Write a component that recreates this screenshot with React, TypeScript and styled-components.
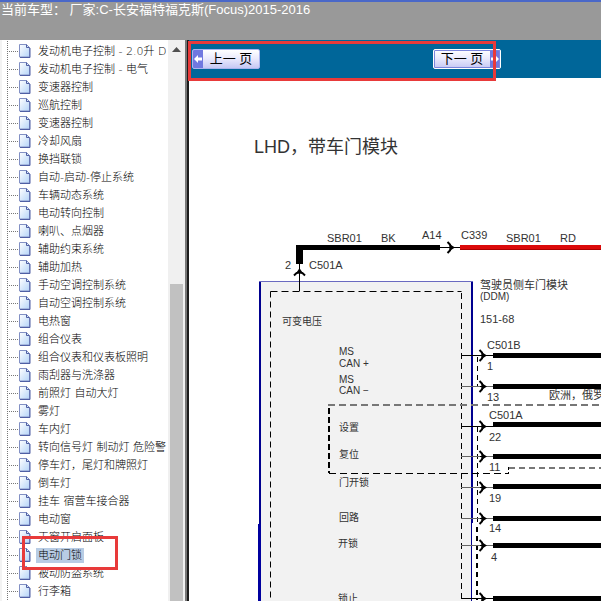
import React from "react";
import styled, { createGlobalStyle } from "styled-components";

const GlobalStyle = createGlobalStyle`
  * { box-sizing: border-box; }
  body {
    margin: 0;
    background: #fff;
    font-family: "Liberation Sans", "Noto Sans CJK SC", sans-serif;
  }
`;

const Page = styled.div`
  display: flex;
  flex-direction: column;
  height: 100vh;
  overflow: hidden;
  position: relative;
`;

const Header = styled.header`
  flex: none;
  height: 40px;
  background: #999;
  border-top: 2px solid #4a68c8;
  color: #fff;
  font-size: 13px;
  font-weight: 400;
  line-height: 16px;
  padding-left: 1px;
  white-space: pre;
`;

const Body = styled.div`
  flex: 1;
  min-height: 0;
  display: flex;
`;

const Sidebar = styled.nav`
  flex: none;
  width: 189px;
  display: flex;
  overflow: hidden;
  border-right: 2px solid #1c1c1c;
`;

const TreeScroll = styled.div`
  flex: 1;
  min-width: 0;
  overflow: hidden;
  border-left: 2px solid #f3f3f3;
`;

const Tree = styled.ul`
  list-style: none;
  margin: -16px 0 0 5px;
  padding: 0;
  border-left: 1px dotted #777;
`;

const TreeRow = styled.li`
  display: flex;
  align-items: center;
  height: 18px;
  white-space: nowrap;
`;

const Branch = styled.span`
  flex: none;
  width: 9px;
  margin-left: 1px;
  border-top: 1px dotted #777;
`;

const PageIconSvg = styled.svg`
  flex: none;
  display: block;
`;

const TreeLink = styled.a<{ $selected?: boolean }>`
  margin-left: 4px;
  padding: 0 2px;
  height: 15px;
  line-height: 15px;
  font-family: "DejaVu Sans", "Noto Sans CJK SC", sans-serif;
  font-size: 11px;
  font-weight: 300;
  color: #000;
  text-decoration: none;
  background: ${(p) => (p.$selected ? "#b8cce4" : "transparent")};
`;

const ScrollTrack = styled.div`
  flex: none;
  width: 19px;
  display: flex;
  flex-direction: column;
  align-items: center;
  background: #f0f0f0;
  border-right: 2px solid #777;
  padding-top: 7px;
`;

const ScrollUp = styled.svg`
  flex: none;
  display: block;
`;

const ScrollThumb = styled.div`
  width: 13px;
  flex: 1;
  margin-top: 232px;
  background: #c1c1c1;
`;

const Content = styled.main`
  flex: 1;
  min-width: 0;
  display: flex;
  flex-direction: column;
`;

const Toolbar = styled.div`
  flex: none;
  height: 38px;
  display: flex;
  align-items: center;
  gap: 173px;
  padding-left: 3px;
  background: #069;
`;

const PagerButton = styled.button<{ $next?: boolean }>`
  display: flex;
  flex-direction: ${(p) => (p.$next ? "row-reverse" : "row")};
  align-items: stretch;
  flex: none;
  width: 68px;
  height: 20px;
  padding: 0;
  overflow: hidden;
  border: 1px solid ${(p) => (p.$next ? "#fff" : "#aab4ee")};
  border-radius: 2px;
  outline: ${(p) => (p.$next ? "1px solid #7c86dd" : "none")};
  outline-offset: -2px;
  background: linear-gradient(#fff, #e8e8fc 50%, #c6c8f4);
  color: #000;
  font-family: "Liberation Sans", "Noto Sans CJK SC", sans-serif;
  font-size: 13px;
  font-weight: 400;
`;

const PagerIcon = styled.svg`
  flex: none;
  display: block;
  background: #7078e0;
`;

const PagerText = styled.span`
  flex: 1;
  line-height: 18px;
  text-align: center;
  white-space: pre;
`;

const Canvas = styled.div`
  flex: 1;
  min-height: 0;
  overflow: hidden;
`;

const Diagram = styled.svg`
  display: block;
  width: 100%;
  height: 100%;
  font-family: "Liberation Sans", "Noto Sans CJK SC", sans-serif;
  font-weight: 400;
  fill: #333;
`;

const Highlight = styled.div<{ $x: number; $y: number; $w: number; $h: number }>`
  position: absolute;
  left: ${(p) => p.$x}px;
  top: ${(p) => p.$y}px;
  width: ${(p) => p.$w}px;
  height: ${(p) => p.$h}px;
  border: 3px solid #e83a3a;
  pointer-events: none;
`;

const treeItems = [
  "",
  "发动机电子控制 - 2.0升 D",
  "发动机电子控制 - 电气",
  "变速器控制",
  "巡航控制",
  "变速器控制",
  "冷却风扇",
  "换挡联锁",
  "自动-启动-停止系统",
  "车辆动态系统",
  "电动转向控制",
  "喇叭、点烟器",
  "辅助约束系统",
  "辅助加热",
  "手动空调控制系统",
  "自动空调控制系统",
  "电热窗",
  "组合仪表",
  "组合仪表和仪表板照明",
  "雨刮器与洗涤器",
  "前照灯 自动大灯",
  "雾灯",
  "车内灯",
  "转向信号灯 制动灯 危险警",
  "停车灯，尾灯和牌照灯",
  "倒车灯",
  "挂车 宿营车接合器",
  "电动窗",
  "天窗开启面板",
  "电动门锁",
  "被动防盗系统",
  "行李箱",
  "",
];

function PageIcon() {
  return (
    <PageIconSvg width="14" height="16" viewBox="0 0 14 16" aria-hidden="true">
      <defs>
        <linearGradient id="sheet" x1="0" y1="0" x2="1" y2="1">
          <stop offset="0" stopColor="#fff" />
          <stop offset="1" stopColor="#b4d4f8" />
        </linearGradient>
      </defs>
      <path d="M1.5 1.5h7l3 3v9.500h-10z" fill="url(#sheet)" stroke="#8290c4" />
      <path d="M8.500 1.500v3h3M12 5v9.500H2" fill="none" stroke="#4f5fa4" />
    </PageIconSvg>
  );
}

type Wire = { y: number; thin: string; top: number; pin: string; px: number; py: number };

const wires: Wire[] = [
  { y: 355, thin: "#000", top: 353, pin: "1", px: 487, py: 370 },
  { y: 386, thin: "#666", top: 384, pin: "13", px: 487, py: 401 },
  { y: 426, thin: "#000", top: 422, pin: "22", px: 489, py: 441 },
  { y: 456, thin: "#666", top: 454, pin: "11", px: 489, py: 471 },
  { y: 487, thin: "#666", top: 484, pin: "19", px: 489, py: 502 },
  { y: 518, thin: "#666", top: 516, pin: "14", px: 489, py: 532 },
  { y: 545, thin: "#666", top: 543, pin: "4", px: 491, py: 561 },
  { y: 598, thin: "#000", top: 596, pin: "", px: 491, py: 614 },
];

type Label = { x: number; y: number; size: number; text: string };

const labels: Label[] = [
  { x: 254, y: 153, size: 18, text: "LHD，带车门模块" },
  { x: 327, y: 242, size: 11, text: "SBR01" },
  { x: 381, y: 242, size: 11, text: "BK" },
  { x: 422, y: 239, size: 11, text: "A14" },
  { x: 461, y: 239, size: 11, text: "C339" },
  { x: 506, y: 242, size: 11, text: "SBR01" },
  { x: 560, y: 242, size: 11, text: "RD" },
  { x: 285, y: 269, size: 11, text: "2" },
  { x: 309, y: 269, size: 11, text: "C501A" },
  { x: 480, y: 289, size: 11, text: "驾驶员侧车门模块" },
  { x: 480, y: 300, size: 10, text: "(DDM)" },
  { x: 480, y: 323, size: 11, text: "151-68" },
  { x: 282, y: 325, size: 10, text: "可变电压" },
  { x: 339, y: 355, size: 10, text: "MS" },
  { x: 339, y: 367, size: 10, text: "CAN +" },
  { x: 339, y: 383, size: 10, text: "MS" },
  { x: 339, y: 394, size: 10, text: "CAN −" },
  { x: 339, y: 431, size: 10, text: "设置" },
  { x: 339, y: 458, size: 10, text: "复位" },
  { x: 339, y: 486, size: 10, text: "门开锁" },
  { x: 339, y: 521, size: 10, text: "回路" },
  { x: 338, y: 547, size: 10, text: "开锁" },
  { x: 338, y: 602, size: 10, text: "锁止" },
  { x: 487, y: 349, size: 11, text: "C501B" },
  { x: 489, y: 419, size: 11, text: "C501A" },
  { x: 549, y: 399, size: 11, text: "欧洲，俄罗" },
];

const FAR = 3000;

function ArrowHead({ x, y, up }: { x: number; y: number; up?: boolean }) {
  return (
    <g transform={`translate(${x} ${y})${up ? " rotate(-90)" : ""}`}>
      <path d="M-5.500 -5.500L-3 -3L-2 0L-3 3L-5.500 5.500" fill="none" stroke="#000" strokeWidth="2" />
      <path d="M-3.500 -3.500L2 0L-3.500 3.500Z" fill="#000" />
      <path d="M-5 0H0" stroke="#000" />
    </g>
  );
}

function WiringDiagram() {
  return (
    <Diagram role="img" aria-label="LHD，带车门模块">
      <g transform="translate(-189 -78)">
        {/* door module housing */}
        <rect x="260" y="282" width="212" height="2000" fill="#f2f2f2" />
        <path d="M259 281.500H473" stroke="#6a6ac0" />
        <path d="M260 282V524" stroke="#00008f" strokeWidth="2" />
        <path d="M259.500 524V2200" stroke="#00009f" strokeWidth="3" />
        <path d="M472 282V523" stroke="#00008f" strokeWidth="2" />
        <path d="M471.500 523V2200" stroke="#00008f" />
        <g fill="none" stroke="#000">
          <path d="M270.500 291.500H461.500" strokeDasharray="7 4" />
          <path d="M270.500 291.500V2200" strokeDasharray="6 4" />
          <path d="M461.500 293V2200" strokeDasharray="6 4" />
        </g>

        {/* supply line */}
        <path d="M296 245H440V250H303V264H296Z" fill="#000" />
        <path d="M299.500 264V291M440 247.500H460" stroke="#000" />
        <ArrowHead x={299.5} y={270} up />
        <ArrowHead x={453} y={247.5} />
        <rect x="460" y="245" width={FAR} height="5" fill="#dc0a0a" />
        <path d="M460 249.500H3000" stroke="#a00" />

        {/* option group */}
        <path d="M328 405H3000" stroke="#777" strokeWidth="2" strokeDasharray="7 4" />
        <path d="M329 408V473" stroke="#000" strokeWidth="2" strokeDasharray="6 3" />
        <path d="M329 473.500H508" stroke="#000" strokeDasharray="7 4" />
        <path d="M508.500 467V474" stroke="#000" strokeDasharray="3 2" />
        <path d="M509 468H3000" stroke="#777" strokeWidth="2" strokeDasharray="6 4" />

        {/* connector pins */}
        <g stroke="#000" strokeDasharray="5 4">
          <path d="M477.500 357V387" />
          <path d="M477.500 427V523" />
          <path d="M477 527V600" strokeWidth="2" />
        </g>
        {wires.map((w) => (
          <g key={w.y}>
            <rect x="461" y={w.y} width="32" height="1" fill={w.thin} />
            <ArrowHead x={485} y={w.y + 0.5} />
            <rect x="493" y={w.top} width={FAR} height="5" fill="#000" />
            <text x={w.px} y={w.py} fontSize="11">{w.pin}</text>
          </g>
        ))}

        {labels.map((l) => (
          <text key={`${l.x}-${l.y}`} x={l.x} y={l.y} fontSize={l.size}>{l.text}</text>
        ))}
      </g>
    </Diagram>
  );
}

export default function App() {
  return (
    <>
      <GlobalStyle />
      <Page>
        <Header>{"当前车型： 厂家:C-长安福特福克斯(Focus)2015-2016"}</Header>
        <Body>
          <Sidebar>
            <TreeScroll>
              <Tree>
                {treeItems.map((label, i) => (
                  <TreeRow key={i}>
                    <Branch />
                    <PageIcon />
                    {label && (
                      <TreeLink href="#" $selected={label === "电动门锁"}>{label}</TreeLink>
                    )}
                  </TreeRow>
                ))}
              </Tree>
            </TreeScroll>
            <ScrollTrack>
              <ScrollUp width="9" height="5" viewBox="0 0 9 5" aria-hidden="true">
                <path d="M4.500 0L9 5H0Z" fill="#505050" />
              </ScrollUp>
              <ScrollThumb />
            </ScrollTrack>
          </Sidebar>
          <Content>
            <Toolbar>
              <PagerButton type="button">
                <PagerIcon width="10" height="18" viewBox="0 0 10 18" aria-hidden="true">
                  <path d="M1 9L5 5V7.500H9V10.500H5V13Z" fill="#fff" />
                </PagerIcon>
                <PagerText>上一 页</PagerText>
              </PagerButton>
              <PagerButton type="button" $next>
                <PagerIcon width="10" height="18" viewBox="0 0 10 18" aria-hidden="true">
                  <path d="M9 9L5 5V7.500H1V10.500H5V13Z" fill="#fff" />
                </PagerIcon>
                <PagerText>下一 页</PagerText>
              </PagerButton>
            </Toolbar>
            <Canvas>
              <WiringDiagram />
            </Canvas>
          </Content>
        </Body>
        <Highlight $x={188} $y={41} $w={308} $h={40} />
        <Highlight $x={22} $y={536} $w={96} $h={34} />
      </Page>
    </>
  );
}
